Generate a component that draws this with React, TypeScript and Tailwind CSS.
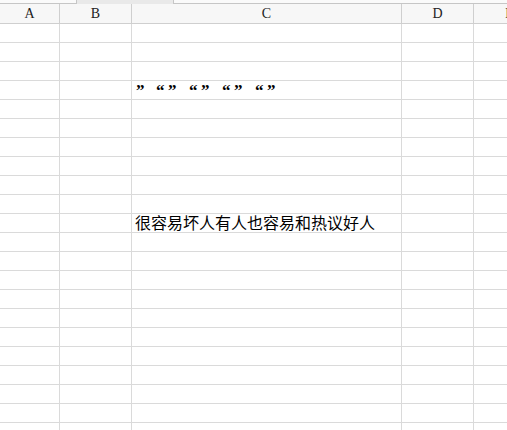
import React from 'react';

const cols = [
  { key: 'A', w: 'w-[60px]' },
  { key: 'B', w: 'w-[72px]' },
  { key: 'C', w: 'w-[270px]' },
  { key: 'D', w: 'w-[72px]' },
  { key: 'E', w: 'w-[72px]' },
];

const Quotes: React.FC = () => (
  <span className="absolute left-[4px] top-0 flex h-[19px] items-start pt-[1px] text-[17px] leading-[17px] font-bold text-black [font-family:'Liberation_Serif',serif]">
    <span className="w-[20px]">”</span>
    {[0, 1, 2, 3].map((i) => (
      <React.Fragment key={i}>
        <span className="w-[12px]">“</span>
        <span className="w-[21px]">”</span>
      </React.Fragment>
    ))}
  </span>
);

const App: React.FC = () => {
  const rows = Array.from({ length: 22 }, (_, i) => i);
  return (
    <div className="w-[507px] h-[430px] overflow-hidden bg-white">
      {/* top strip */}
      <div className="flex h-[4px] bg-[#e9e9e9]">
        <div className="w-[77px] bg-[#fafafa] border-b border-r border-[#c6c6c6]" />
        <div className="w-[96px]" />
        <div className="flex-1 bg-[#fafafa] border-b border-l border-[#c6c6c6]" />
      </div>
      {/* column headers */}
      <div className="flex h-[20px] bg-[#f7f7f7] border-b border-[#cfcfcf]">
        {cols.map((c) => (
          <div
            key={c.key}
            className={`${c.w} shrink-0 border-r border-[#cfcfcf] flex items-center justify-center text-[14px] text-[#222] [font-family:'Liberation_Serif','Noto_Sans_CJK_SC',serif]`}
          >
            {c.key}
          </div>
        ))}
      </div>
      {/* grid */}
      {rows.map((r) => (
        <div key={r} className="flex h-[19px] border-b border-[#dadada]">
          {cols.map((c) => (
            <div key={c.key} className={`${c.w} shrink-0 border-r border-[#dadada] relative`}>
              {r === 3 && c.key === 'C' && <Quotes />}
              {r === 10 && c.key === 'C' && (
                <span className="absolute left-[3px] bottom-0 whitespace-nowrap text-[16px] leading-[19px] text-black [font-family:'Noto_Sans_CJK_SC',sans-serif]">
                  很容易坏人有人也容易和热议好人
                </span>
              )}
            </div>
          ))}
        </div>
      ))}
    </div>
  );
};

export default App;
